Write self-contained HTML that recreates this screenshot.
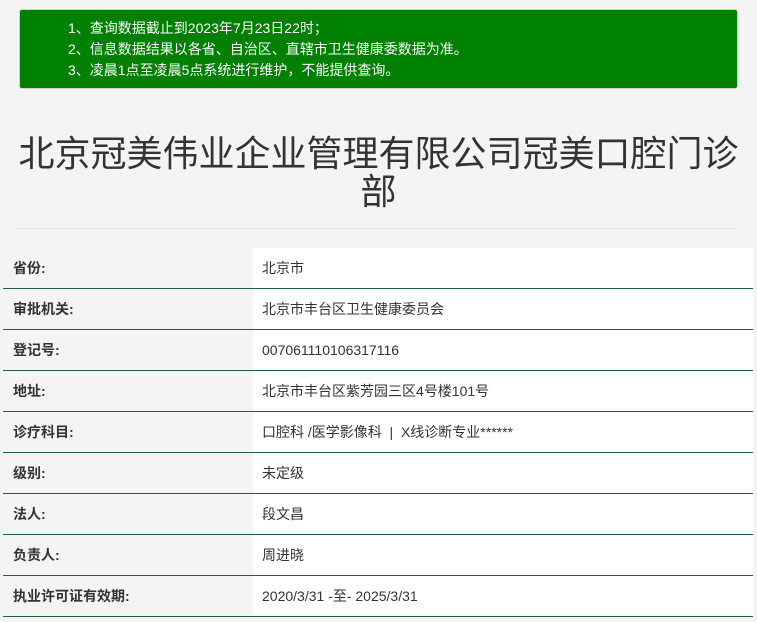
<!DOCTYPE html>
<html><head><meta charset="utf-8"><style>
body{margin:0;background:#f4f4f4;width:757px;height:622px;overflow:hidden;font-family:"Liberation Sans","Noto Sans CJK SC",sans-serif;}
.notice{position:absolute;left:19px;top:9px;width:719px;height:80px;background:#008000;border:1px solid #e3c8c8;border-radius:3px;box-sizing:border-box;color:#fff;font-size:14px;line-height:21px;padding:8px 0 0 48px;}
h1{position:absolute;left:0;top:135px;width:757px;margin:0;text-align:center;font-weight:normal;font-size:36px;line-height:38px;color:#333;}
.sep{position:absolute;left:18px;top:228px;width:719px;height:1px;background:#e6e6e6;}
table{position:absolute;left:3px;top:248px;width:750px;border-collapse:collapse;font-size:14px;color:#333;}
td{height:40px;border-bottom:1.5px solid #1f5f3a;padding:0;}
td.k{width:250px;font-weight:bold;padding-left:10px;background:#f4f4f4;box-sizing:border-box;}
td.v{background:#fff;padding-left:9px;}
</style></head><body>
<div class="notice">1、查询数据截止到2023年7月23日22时；<br>2、信息数据结果以各省、自治区、直辖市卫生健康委数据为准。<br>3、凌晨1点至凌晨5点系统进行维护，不能提供查询。</div>
<h1>北京冠美伟业企业管理有限公司冠美口腔门诊<br>部</h1>
<div class="sep"></div>
<table>
<tr><td class="k">省份:</td><td class="v">北京市</td></tr>
<tr><td class="k">审批机关:</td><td class="v">北京市丰台区卫生健康委员会</td></tr>
<tr><td class="k">登记号:</td><td class="v">007061110106317116</td></tr>
<tr><td class="k">地址:</td><td class="v">北京市丰台区紫芳园三区4号楼101号</td></tr>
<tr><td class="k">诊疗科目:</td><td class="v">口腔科 /医学影像科 &nbsp;| &nbsp;X线诊断专业******</td></tr>
<tr><td class="k">级别:</td><td class="v">未定级</td></tr>
<tr><td class="k">法人:</td><td class="v">段文昌</td></tr>
<tr><td class="k">负责人:</td><td class="v">周进晓</td></tr>
<tr><td class="k">执业许可证有效期:</td><td class="v">2020/3/31 -至- 2025/3/31</td></tr>
</table>
</body></html>
